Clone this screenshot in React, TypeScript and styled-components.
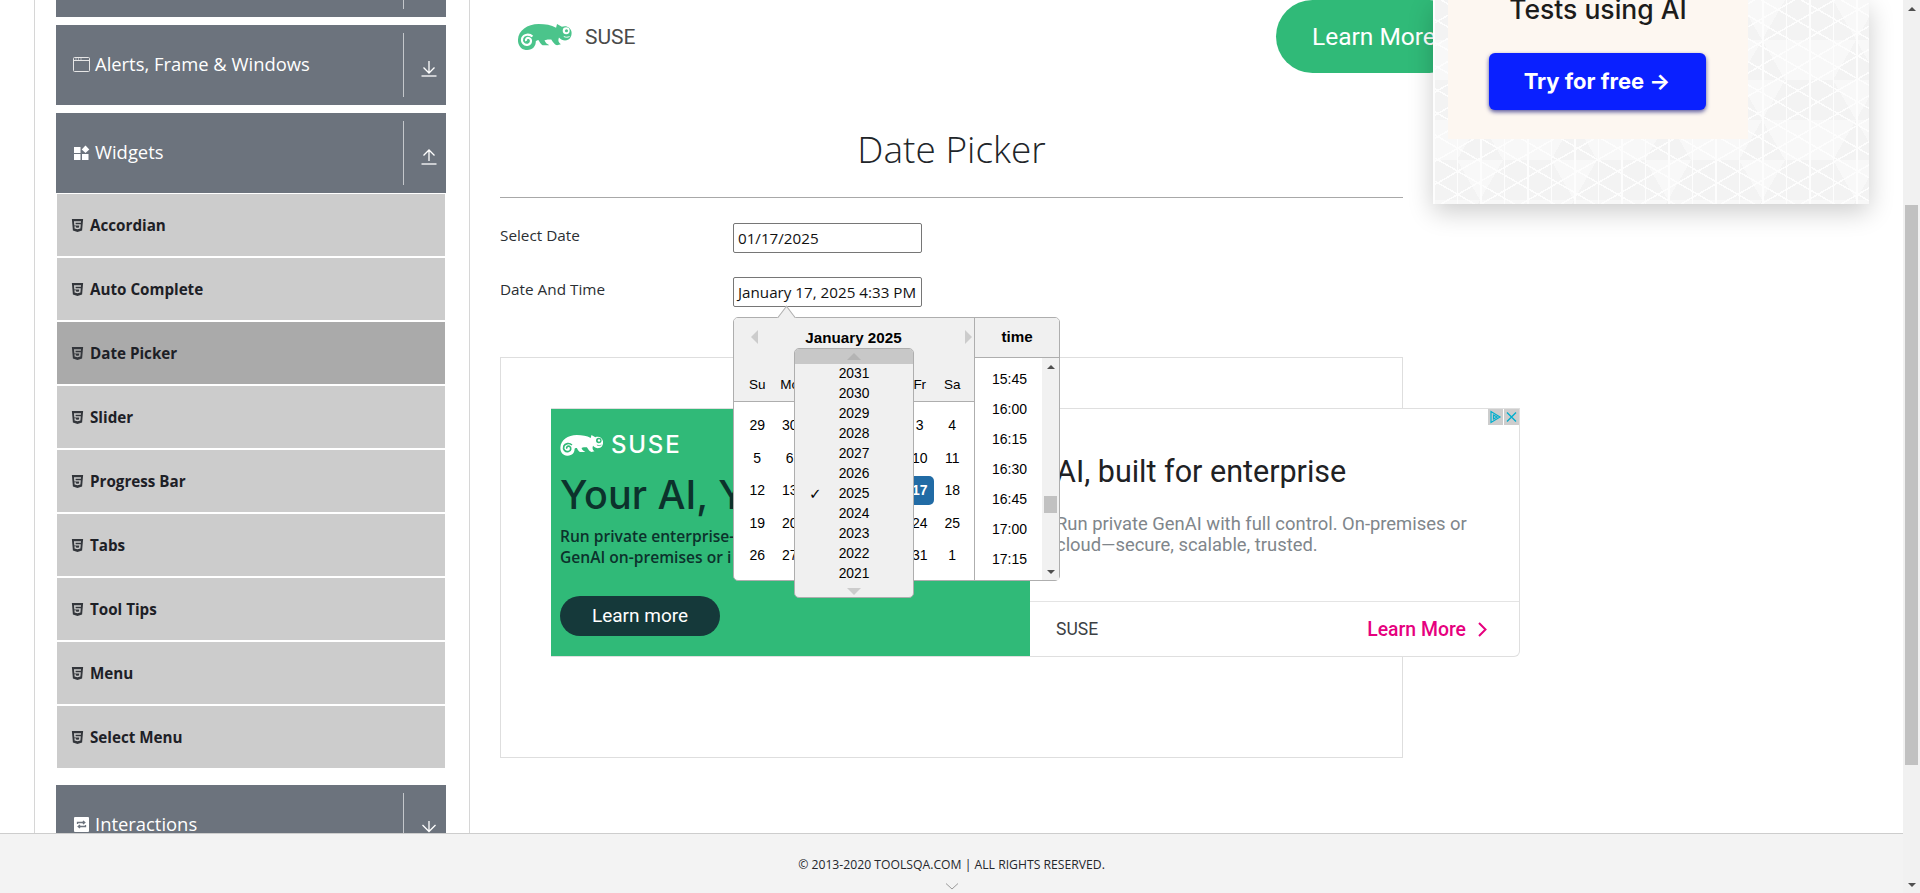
import React from 'react'
import styled, { createGlobalStyle } from 'styled-components'
import { FaHtml5 } from 'react-icons/fa'

const GlobalStyle = createGlobalStyle`
  html, body {
    margin: 0;
    height: 100%;
    overflow: hidden;
    background: #fff;
    font-family: "Open Sans", sans-serif;
    color: #212529;
  }
  * { box-sizing: border-box; }
`

const Shell = styled.div`
  display: flex;
  width: 1920px;
  height: 893px;
`

const Page = styled.div`
  display: flex;
  flex-direction: column;
  width: 1903px;
  height: 893px;
`

const Body = styled.div`
  display: flex;
  align-items: flex-start;
  height: 833px;
  overflow: hidden;
  padding-left: 34px;
`

const Sidebar = styled.aside`
  flex: none;
  width: 436px;
  height: 833px;
  padding: 0 23px 0 21px;
  border-left: 1px solid #d6d6d6;
  border-right: 1px solid #d6d6d6;
  display: flex;
  flex-direction: column;
`

const GroupHeader = styled.div<{ $first?: boolean }>`
  flex: none;
  display: flex;
  height: 80px;
  margin-top: ${p => (p.$first ? '-63px' : '8px')};
  background: #6c737d;
  color: #fff;
`

const GroupLabel = styled.div`
  flex: 1;
  display: flex;
  align-items: center;
  gap: 5px;
  padding: 0 0 2px 17px;
  font-size: 18.4px;
  line-height: 24px;
`

const GroupToggle = styled.div`
  flex: none;
  width: 43px;
  margin: 8px 0;
  padding: 27px 0 0 17px;
  border-left: 1px solid #c4c7cb;
`

const ItemList = styled.div`
  flex: none;
  display: flex;
  flex-direction: column;
  gap: 2px;
  padding: 1px 1px 0;
  margin-bottom: 9px;
`

const Item = styled.div<{ $active?: boolean }>`
  display: flex;
  align-items: center;
  gap: 5px;
  height: 62px;
  padding-left: 13px;
  background: ${p => (p.$active ? '#aaaaaa' : '#cccccc')};
  font-size: 15.2px;
  font-weight: 700;
  color: #1d2026;

  svg {
    color: #33363b;
    font-size: 15px;
  }
`

const Content = styled.main`
  flex: none;
  width: 903px;
  margin-left: 30px;
`

const Banner = styled.div`
  display: flex;
  align-items: center;
  height: 73px;
`

const BrandName = styled.span`
  margin-left: 13px;
  font-family: Roboto, sans-serif;
  font-size: 21px;
  color: #4a4a4a;
`

const BrandLogo = styled.svg`
  width: 55px;
  height: 27px;
  margin-left: 17px;
`

const LearnPill = styled.div`
  width: 190px;
  height: 73px;
  margin-left: auto;
  margin-right: -63px;
  padding-left: 36px;
  border-radius: 37px;
  background: #30ba78;
  color: #fff;
  font-family: Roboto, sans-serif;
  font-size: 24.5px;
  line-height: 73px;
  white-space: nowrap;
`

const Title = styled.h1`
  margin: 0;
  height: 125px;
  padding-top: 49px;
  border-bottom: 1px solid #a8a8a8;
  text-align: center;
  font-size: 37px;
  font-weight: 300;
  line-height: 54px;
  color: #212529;
`

const Form = styled.div`
  display: flex;
  flex-direction: column;
  gap: 24px;
  padding-top: 25px;
`

const FormRow = styled.div`
  position: relative;
  display: flex;
  align-items: flex-start;
`

const FormLabel = styled.label`
  width: 233px;
  font-size: 15.3px;
  line-height: 24px;
  color: #2b2f33;
`

const DateField = styled.div`
  width: 189px;
  height: 30px;
  padding: 0 4px;
  border: 1px solid #767676;
  border-radius: 2px;
  font-size: 15.2px;
  line-height: 28px;
  color: #111;
  white-space: nowrap;
`

const Popover = styled.div`
  position: absolute;
  z-index: 5;
  top: 40px;
  left: 233px;
  display: flex;
  width: 327px;
  height: 264px;
  border: 1px solid #aeaeae;
  border-radius: 5px;
  background: #fff;
  font-family: "Liberation Sans", Arial, sans-serif;
  color: #000;

  &::before {
    content: '';
    position: absolute;
    top: -8px;
    left: 45px;
    width: 14px;
    height: 14px;
    background: #f0f0f0;
    border-top: 1px solid #aeaeae;
    border-left: 1px solid #aeaeae;
    transform: rotate(45deg) skew(8deg, 8deg);
  }
`

const MonthPanel = styled.div`
  position: relative;
  width: 241px;
  border-right: 1px solid #aeaeae;
`

const MonthHeader = styled.div`
  height: 84px;
  background: #f0f0f0;
  border-bottom: 1px solid #aeaeae;
  border-top-left-radius: 4px;
`

const MonthBar = styled.div`
  display: flex;
  align-items: center;
  justify-content: space-between;
  height: 38px;
  padding: 0 2px 0 17px;
`

const MonthName = styled.span`
  margin-right: 16px;
  font-size: 15.2px;
  font-weight: 700;
`

const NavArrow = styled.i<{ $dir: 'left' | 'right' }>`
  width: 0;
  height: 0;
  border-top: 7px solid transparent;
  border-bottom: 7px solid transparent;
  border-${p => p.$dir === 'left' ? 'right' : 'left'}: 7px solid #ccc;
`

const WeekRow = styled.div`
  display: grid;
  grid-template-columns: repeat(7, 32.5px);
  padding: 19px 0 0 7px;
  font-size: 13.5px;
  line-height: 20px;
  text-align: center;
`

const DayGrid = styled.div`
  display: grid;
  grid-template-columns: repeat(7, 32.5px);
  grid-auto-rows: 32.5px;
  padding: 7px 0 0 7px;
  font-size: 14px;
`

const Day = styled.div<{ $selected?: boolean }>`
  display: flex;
  align-items: center;
  justify-content: center;
  margin: 2px;
  border-radius: 5px;
  background: ${p => (p.$selected ? '#216ba5' : 'transparent')};
  color: ${p => (p.$selected ? '#fff' : '#000')};
  font-weight: ${p => (p.$selected ? 700 : 400)};
`

const YearMenu = styled.div`
  position: absolute;
  top: 30px;
  left: 60px;
  z-index: 2;
  width: 120px;
  height: 250px;
  border: 1px solid #aeaeae;
  border-radius: 5px;
  background: #f0f0f0;
  overflow: hidden;
`

const YearCap = styled.div<{ $top?: boolean }>`
  display: flex;
  align-items: center;
  justify-content: center;
  height: ${p => (p.$top ? '15px' : '14px')};
  background: ${p => (p.$top ? '#c8c8c8' : 'transparent')};
`

const YearArrow = styled.i<{ $up?: boolean }>`
  width: 0;
  height: 0;
  border-left: 7px solid transparent;
  border-right: 7px solid transparent;
  ${p => (p.$up ? 'border-bottom: 7px solid #b4b4b4;' : 'border-top: 7px solid #ccc;')}
`

const Year = styled.div<{ $current?: boolean }>`
  position: relative;
  height: 20px;
  font-size: 13.8px;
  line-height: 20px;
  text-align: center;

  &::before {
    content: ${p => (p.$current ? "'✓'" : 'none')};
    position: absolute;
    left: 14px;
    font-family: "DejaVu Sans", sans-serif;
    font-size: 15px;
  }
`

const TimePanel = styled.div`
  flex: 1;
  display: flex;
  flex-direction: column;
  min-width: 0;
`

const TimeHead = styled.div`
  flex: none;
  height: 40px;
  background: #f0f0f0;
  border-bottom: 1px solid #aeaeae;
  border-top-right-radius: 4px;
  text-align: center;
  font-size: 15.2px;
  font-weight: 700;
  line-height: 38px;
`

const TimeBody = styled.div`
  flex: 1;
  display: flex;
  min-height: 0;
`

const TimeList = styled.div`
  flex: 1;
  padding: 6px 0 0 2px;
`

const TimeItem = styled.div`
  height: 30px;
  font-size: 14px;
  line-height: 30px;
  text-align: center;
`

const Track = styled.div`
  flex: none;
  display: flex;
  flex-direction: column;
  width: 17px;
  background: #f1f1f1;
`

const TrackButton = styled.div<{ $bottom?: boolean }>`
  flex: none;
  display: flex;
  align-items: center;
  justify-content: center;
  height: 17px;
  margin-top: ${p => (p.$bottom ? 'auto' : '0')};

  &::before {
    content: '';
    border-left: 4px solid transparent;
    border-right: 4px solid transparent;
    ${p => (p.$bottom ? 'border-top: 4px solid #505050;' : 'border-bottom: 4px solid #505050;')}
  }
`

const Thumb = styled.div<{ $top: number; $height: number }>`
  flex: none;
  width: 13px;
  height: ${p => p.$height}px;
  margin: ${p => p.$top}px 2px 0;
  background: #c1c1c1;
`

const Frame = styled.div`
  height: 401px;
  margin-top: 50px;
  padding: 50px 0 0 50px;
  border: 1px solid #dedede;
`

const AdCard = styled.div`
  position: relative;
  display: flex;
  width: 969px;
  height: 249px;
  border: 1px solid #dfdfdf;
  border-left: 0;
  border-radius: 0 0 6px 0;
  background: #fff;
`

const AdGreen = styled.div`
  flex: none;
  width: 479px;
  padding: 25px 0 0 9px;
  background: #30ba78;
  color: #0c322c;
`

const AdBrand = styled.div`
  display: flex;
  align-items: center;
  gap: 8px;
  color: #fff;
  font-family: Inter, sans-serif;
  font-size: 24px;
  font-weight: 500;
  letter-spacing: 1.8px;
  line-height: 22px;
`

const AdBrandLogo = styled.svg`
  width: 43px;
  height: 22px;
`

const AdHeadline = styled.div`
  margin-top: 14px;
  font-family: Inter, sans-serif;
  font-size: 39.5px;
  font-weight: 500;
  line-height: 50px;
  white-space: nowrap;
`

const AdText = styled.div`
  margin-top: 6px;
  font-size: 15.6px;
  font-weight: 600;
  line-height: 21px;
  white-space: nowrap;
`

const AdButton = styled.div`
  width: 160px;
  height: 40px;
  margin-top: 28px;
  border-radius: 20px;
  background: #15393a;
  color: #fff;
  font-family: Roboto, sans-serif;
  font-size: 19px;
  line-height: 40px;
  text-align: center;
`

const AdWhite = styled.div`
  flex: 1;
  display: flex;
  flex-direction: column;
  min-width: 0;
`

const AdMain = styled.div`
  height: 193px;
  padding: 45px 0 0 26px;
  border-bottom: 1px solid #e4e4e4;
`

const AdTitle = styled.div`
  font-family: Roboto, sans-serif;
  font-size: 30.5px;
  line-height: 36px;
  color: #202124;
  white-space: nowrap;
`

const AdCopy = styled.div`
  margin-top: 23px;
  font-family: Roboto, sans-serif;
  font-size: 18.4px;
  line-height: 21px;
  color: #80868b;
  white-space: nowrap;
`

const AdFoot = styled.div`
  flex: 1;
  display: flex;
  align-items: center;
  justify-content: space-between;
  padding: 0 32px 0 26px;
  font-family: Roboto, sans-serif;
  font-size: 17.5px;
  color: #3c4043;
`

const AdLink = styled.span`
  display: flex;
  align-items: center;
  gap: 12px;
  color: #e6007e;
  font-size: 19.4px;
  font-weight: 500;
`

const AdChoices = styled.div`
  position: absolute;
  top: 0;
  right: 0;
  display: flex;
  gap: 1px;

  svg {
    display: block;
    width: 15px;
    height: 16px;
    background: #cdcdcd;
  }
`

const PromoColumn = styled.aside`
  position: relative;
  z-index: 2;
  flex: none;
  display: flex;
  flex-direction: column;
  justify-content: flex-end;
  width: 436px;
  height: 204px;
  margin-left: 30px;
  padding: 0 0 65px 15px;
  background-color: #f8f8f8;
  background-image:
    repeating-linear-gradient(90deg, #fdfdfd 0 1.5px, transparent 1.5px 23.5px),
    repeating-linear-gradient(30deg, #fdfdfd 0 1.5px, transparent 1.5px 20px),
    repeating-linear-gradient(150deg, #fdfdfd 0 1.5px, transparent 1.5px 20px),
    repeating-conic-gradient(from 30deg, rgba(0, 0, 0, 0.018) 0 60deg, transparent 60deg 120deg);
  background-size: auto, auto, auto, 94px 80px;
  box-shadow: 0 8px 24px rgba(0, 0, 0, 0.2);
`

const PromoPanel = styled.div`
  display: flex;
  flex-direction: column;
  align-items: center;
  width: 300px;
  height: 139px;
  background: #fdf7f1;
  overflow: hidden;
`

const PromoTitle = styled.div`
  height: 18px;
  font-family: Inter, sans-serif;
  font-size: 26.5px;
  font-weight: 500;
  line-height: 18px;
  color: #1c1c1c;
  white-space: nowrap;
`

const PromoButton = styled.div`
  width: 217px;
  height: 57px;
  margin-top: 35px;
  margin-right: 2px;
  border-radius: 6px;
  background: #0a20ff;
  box-shadow: 0 2px 4px rgba(20, 20, 120, 0.7);
  color: #fff;
  font-family: Inter, sans-serif;
  font-size: 22px;
  font-weight: 700;
  line-height: 57px;
  text-align: center;
`

const Footer = styled.footer`
  flex: none;
  display: flex;
  flex-direction: column;
  align-items: center;
  height: 60px;
  padding-top: 22px;
  background: #f3f3f3;
  border-top: 1px solid #cdcdcd;
  font-size: 12.2px;
  line-height: 18px;
  color: #24272b;
`

const FooterCaret = styled.svg`
  flex: none;
  width: 14px;
  height: 7px;
  margin-top: 9px;
`

const Chameleon = ({ fill, cut, as: Root }: { fill: string; cut: string; as: typeof BrandLogo }) => (
  <Root viewBox="7 6 56 28">
    <path
      fill={fill}
      d="M7.500 23C8 14 17 7 29 7c7 0 13 1 18 4l1-4 5 3c5-2 9 1 10 5 .5 4-1 8-5 9-3 .5-6-.5-8-3-1 3-1 5 2 7l-4 1c-3-1-4-3-6-6-3 0-5 0-7 1 1 3 3 4 5 5h-7c-2-1-3-3-4-5-1 0-2 0-3 1 0 5-3 9-9 9-6 .5-10-5-9.500-11z"
    />
    <path fill="none" stroke={cut} strokeWidth="2.200" d="M22.500 20c-3-3-9-2.500-10.500 1.500-1.500 4.500 2 8 6 7 3.500-1 4-5.500 1.200-6.800-2.200-1-4.200 1-3.200 3" />
    <circle cx="57.500" cy="14" r="3.600" fill={cut} />
    <circle cx="57.800" cy="14" r="1.600" fill={fill} />
    <path fill="none" stroke={cut} strokeWidth="1" d="M55 20c2 1 4 1 6 0" />
  </Root>
)

const WindowIcon = () => (
  <svg width="17" height="15" viewBox="0 0 17 15" fill="none" stroke="#fff">
    <rect x="0.500" y="0.500" width="16" height="14" rx="1" stroke="#e6e6e6" />
    <path d="M1 3.500h15" stroke="#e6e6e6" />
    <path d="M2.500 2h1M5 2h1M7.500 2h1" stroke="#fff" />
  </svg>
)

const WidgetsIcon = () => (
  <svg width="17" height="15" viewBox="0 0 17 15" fill="#fff">
    <rect x="1" y="2" width="6.500" height="6" />
    <rect x="1" y="9" width="6.500" height="6" />
    <rect x="9" y="9" width="6.500" height="6" />
    <path d="M12.500 0.500l3.800 4-3.800 3.500-3.800-3.500z" />
  </svg>
)

const InteractionsIcon = () => (
  <svg width="17" height="15" viewBox="0 0 17 15">
    <rect x="1" width="15" height="15" rx="1" fill="#fff" />
    <path d="M4.500 7V5.500h7M10 4l1.800 1.500L10 7M12.500 8v1.500h-7M7 11L5.200 9.500 7 8" fill="none" stroke="#6c737d" strokeWidth="1.300" />
  </svg>
)

const ToggleIcon = ({ dir, base = true }: { dir: 'up' | 'down'; base?: boolean }) => (
  <svg width="16" height="16" viewBox="0 0 16 16" fill="none" stroke="#fff" strokeWidth="1.300">
    {dir === 'up' && <path d="M8 12V1M2.500 6.500L8 1l5.500 5.500" />}
    {dir === 'down' && base && <path d="M8 0v11.500M2.500 6.500L8 12l5.500-5.500" />}
    {dir === 'down' && !base && <path d="M8 0v10M1.500 4l6.500 6.500L14.500 4" />}
    {base && <path d="M.5 15h15" />}
  </svg>
)

const widgets = ['Accordian', 'Auto Complete', 'Date Picker', 'Slider', 'Progress Bar', 'Tabs', 'Tool Tips', 'Menu', 'Select Menu']
// Tu, We and Th sit fully under the open year menu, so those cells stay empty
const weekdays = ['Su', 'Mo', '', '', '', 'Fr', 'Sa']
const days = [29, 30, '', '', '', 3, 4, 5, 6, '', '', '', 10, 11, 12, 13, '', '', '', 17, 18, 19, 20, '', '', '', 24, 25, 26, 27, '', '', '', 31, 1]
const years = [2031, 2030, 2029, 2028, 2027, 2026, 2025, 2024, 2023, 2022, 2021]
const times = ['15:45', '16:00', '16:15', '16:30', '16:45', '17:00', '17:15']

export default function App() {
  return (
    <Shell>
      <GlobalStyle />
      <Page>
        <Body>
          <Sidebar>
            <GroupHeader $first>
              <GroupLabel />
              <GroupToggle />
            </GroupHeader>
            <GroupHeader>
              <GroupLabel><WindowIcon />Alerts, Frame &amp; Windows</GroupLabel>
              <GroupToggle><ToggleIcon dir="down" /></GroupToggle>
            </GroupHeader>
            <GroupHeader>
              <GroupLabel><WidgetsIcon />Widgets</GroupLabel>
              <GroupToggle><ToggleIcon dir="up" /></GroupToggle>
            </GroupHeader>
            <ItemList>
              {widgets.map(name => (
                <Item key={name} $active={name === 'Date Picker'}>
                  <FaHtml5 />{name}
                </Item>
              ))}
            </ItemList>
            <GroupHeader>
              <GroupLabel><InteractionsIcon />Interactions</GroupLabel>
              <GroupToggle><ToggleIcon dir="down" base={false} /></GroupToggle>
            </GroupHeader>
          </Sidebar>

          <Content>
            <Banner>
              <Chameleon fill="#4bc48b" cut="#fff" as={BrandLogo} />
              <BrandName>SUSE</BrandName>
              <LearnPill>Learn More</LearnPill>
            </Banner>
            <Title>Date Picker</Title>
            <Form>
              <FormRow>
                <FormLabel>Select Date</FormLabel>
                <DateField>01/17/2025</DateField>
              </FormRow>
              <FormRow>
                <FormLabel>Date And Time</FormLabel>
                <DateField>January 17, 2025 4:33 PM</DateField>
                <Popover>
                  <MonthPanel>
                    <MonthHeader>
                      <MonthBar>
                        <NavArrow $dir="left" />
                        <MonthName>January 2025</MonthName>
                        <NavArrow $dir="right" />
                      </MonthBar>
                      <WeekRow>
                        {weekdays.map((d, i) => <span key={i}>{d}</span>)}
                      </WeekRow>
                    </MonthHeader>
                    <DayGrid>
                      {days.map((d, i) => <Day key={i} $selected={d === 17}>{d}</Day>)}
                    </DayGrid>
                    <YearMenu>
                      <YearCap $top><YearArrow $up /></YearCap>
                      {years.map(y => <Year key={y} $current={y === 2025}>{y}</Year>)}
                      <YearCap><YearArrow /></YearCap>
                    </YearMenu>
                  </MonthPanel>
                  <TimePanel>
                    <TimeHead>time</TimeHead>
                    <TimeBody>
                      <TimeList>
                        {times.map(t => <TimeItem key={t}>{t}</TimeItem>)}
                      </TimeList>
                      <Track>
                        <TrackButton />
                        <Thumb $top={121} $height={17} />
                        <TrackButton $bottom />
                      </Track>
                    </TimeBody>
                  </TimePanel>
                </Popover>
              </FormRow>
            </Form>
            <Frame>
              <AdCard>
                <AdGreen>
                  <AdBrand>
                    <Chameleon fill="#fff" cut="#30ba78" as={AdBrandLogo} />
                    SUSE
                  </AdBrand>
                  <AdHeadline>Your AI, Y</AdHeadline>
                  <AdText>Run private enterprise-g<br />GenAI on-premises or i</AdText>
                  <AdButton>Learn more</AdButton>
                </AdGreen>
                <AdWhite>
                  <AdMain>
                    <AdTitle>AI, built for enterprise</AdTitle>
                    <AdCopy>Run private GenAI with full control. On-premises or<br />cloud—secure, scalable, trusted.</AdCopy>
                  </AdMain>
                  <AdFoot>
                    SUSE
                    <AdLink>
                      Learn More
                      <svg width="9" height="15" viewBox="0 0 9 15" fill="none" stroke="#e6007e" strokeWidth="2"><path d="M1 1l6.500 6.500L1 14" /></svg>
                    </AdLink>
                  </AdFoot>
                </AdWhite>
                <AdChoices>
                  <svg viewBox="0 0 15 16" fill="none" stroke="#00aecd" strokeWidth="1.200"><path d="M3 2.500v11l9-5.500zM5.500 6v4l3.500-2z" /></svg>
                  <svg viewBox="0 0 15 16" fill="none" stroke="#00aecd" strokeWidth="1.400"><path d="M3 3.500l9 9M12 3.500l-9 9" /></svg>
                </AdChoices>
              </AdCard>
            </Frame>
          </Content>

          <PromoColumn>
            <PromoPanel>
              <PromoTitle>Tests using AI</PromoTitle>
              <PromoButton>Try for free →</PromoButton>
            </PromoPanel>
          </PromoColumn>
        </Body>
        <Footer>
          © 2013-2020 TOOLSQA.COM | ALL RIGHTS RESERVED.
          <FooterCaret viewBox="0 0 14 7" fill="none" stroke="#999"><path d="M1 .5l6 5.500 6-5.500" /></FooterCaret>
        </Footer>
      </Page>
      <Track>
        <TrackButton />
        <Thumb $top={188} $height={560} />
        <TrackButton $bottom />
      </Track>
    </Shell>
  )
}
